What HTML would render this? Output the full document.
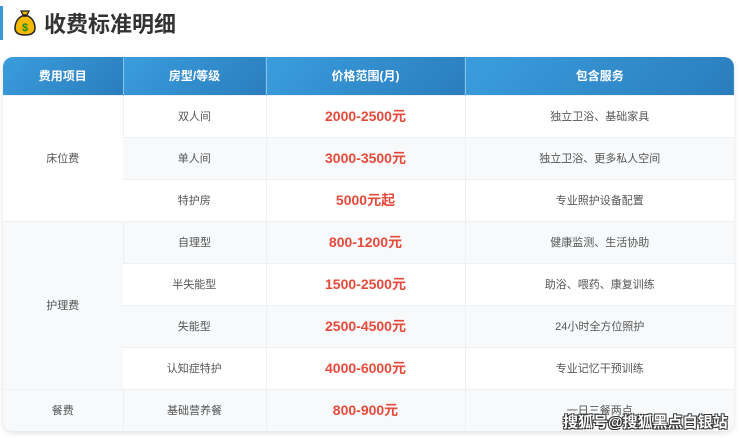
<!DOCTYPE html>
<html><head><meta charset="utf-8"><style>
*{margin:0;padding:0;box-sizing:border-box}
body{width:740px;height:438px;background:#fff;font-family:"Liberation Sans","Noto Sans CJK SC",sans-serif;position:relative;overflow:hidden}
.bar{position:absolute;left:0;top:6px;width:3px;height:34px;background:#3a9ad9}
.title{position:absolute;left:14px;top:7px;height:32px;display:flex;align-items:center;font-size:22px;font-weight:bold;color:#333}
.title svg{margin-right:8px}
.wrap{position:absolute;left:3px;top:57px;width:731px;height:374px;border-radius:10px;overflow:hidden;box-shadow:0 2px 6px rgba(0,0,0,.12)}
table{border-collapse:collapse;width:731px;table-layout:fixed}
th{height:38px;color:#fff;font-size:12px;font-weight:bold;background:linear-gradient(135deg,#3b9ddd,#2a7dbd);border-left:1px solid #8cc2ea}
th:first-child{border-left:none}
td{height:42px;text-align:center;font-size:11px;color:#555;border-left:1px solid #eef0f3;border-top:1px solid #eef1f4}
td:first-child{border-left:none}
tr.g td{background:#f7f9fb}
td.g{background:#f7f9fb}
td.w{background:#fff}
td.p{color:#e64a3b;font-weight:bold;font-size:14px}
.wm{position:absolute;left:563px;top:411px;font-size:15px;font-weight:bold;color:#fff;text-shadow:-1px -1px 0 #333,1px -1px 0 #333,-1px 1px 0 #333,1px 1px 0 #333}
</style></head><body>
<div class="bar"></div>
<div class="title"><svg width="22" height="26" viewBox="0 0 22 26"><path d="M7 1h8l-2 4h-4z" fill="#f0b400" stroke="#222" stroke-width="1.3"/><path d="M8 6C2 9 1 15 1 18c0 5 4 7 10 7s10-2 10-7c0-3-1-9-7-12z" fill="#f5b800" stroke="#222" stroke-width="1.5"/><text x="11" y="21" font-size="11" font-weight="bold" fill="#1a8a2a" text-anchor="middle" font-family="Liberation Sans">$</text></svg>收费标准明细</div>
<div class="wrap"><table>
<colgroup><col style="width:120px"><col style="width:143px"><col style="width:199px"><col style="width:269px"></colgroup>
<tr><th>费用项目</th><th>房型/等级</th><th>价格范围(月)</th><th>包含服务</th></tr>
<tr><td rowspan="3" class="w">床位费</td><td>双人间</td><td class="p">2000-2500元</td><td>独立卫浴、基础家具</td></tr>
<tr class="g"><td>单人间</td><td class="p">3000-3500元</td><td>独立卫浴、更多私人空间</td></tr>
<tr><td>特护房</td><td class="p">5000元起</td><td>专业照护设备配置</td></tr>
<tr class="g"><td rowspan="4" class="g">护理费</td><td>自理型</td><td class="p">800-1200元</td><td>健康监测、生活协助</td></tr>
<tr><td>半失能型</td><td class="p">1500-2500元</td><td>助浴、喂药、康复训练</td></tr>
<tr class="g"><td>失能型</td><td class="p">2500-4500元</td><td>24小时全方位照护</td></tr>
<tr><td>认知症特护</td><td class="p">4000-6000元</td><td>专业记忆干预训练</td></tr>
<tr class="g"><td>餐费</td><td>基础营养餐</td><td class="p">800-900元</td><td>一日三餐两点</td></tr>
</table></div>
<div class="wm">搜狐号@搜狐黑点白银站</div>
</body></html>
